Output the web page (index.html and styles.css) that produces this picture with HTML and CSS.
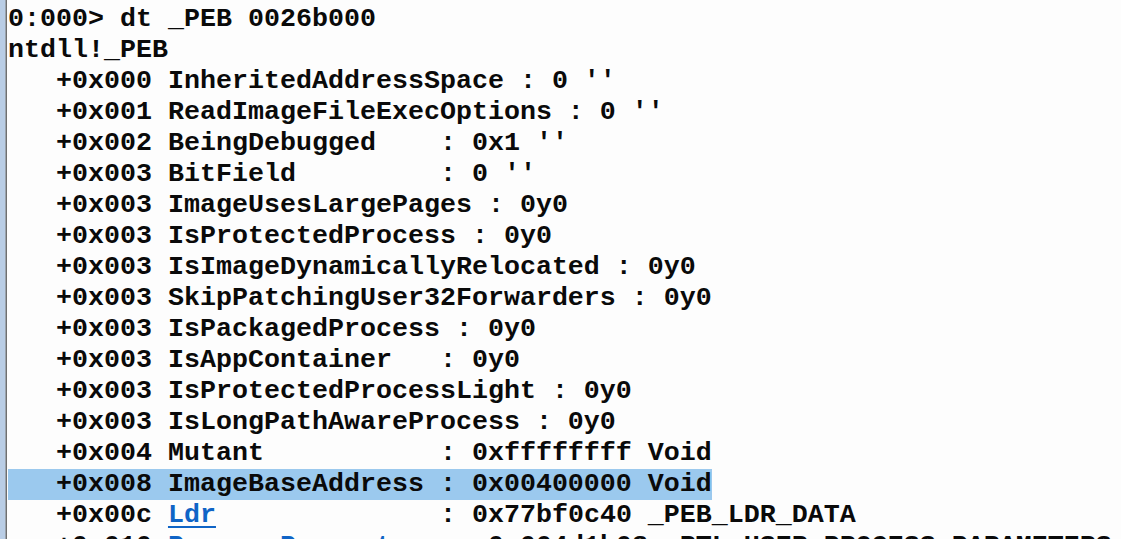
FILE: index.html
```html
<!DOCTYPE html>
<html>
<head>
<meta charset="utf-8">
<link rel="stylesheet" href="styles.css">
</head>
<body>
<div class="window">
  <div class="gutter"></div>
  <div class="output">
    <div class="line">0:000&gt; dt _PEB 0026b000</div>
    <div class="line">ntdll!_PEB</div>
    <div class="line">   +0x000 InheritedAddressSpace : 0 ''</div>
    <div class="line">   +0x001 ReadImageFileExecOptions : 0 ''</div>
    <div class="line">   +0x002 BeingDebugged    : 0x1 ''</div>
    <div class="line">   +0x003 BitField         : 0 ''</div>
    <div class="line">   +0x003 ImageUsesLargePages : 0y0</div>
    <div class="line">   +0x003 IsProtectedProcess : 0y0</div>
    <div class="line">   +0x003 IsImageDynamicallyRelocated : 0y0</div>
    <div class="line">   +0x003 SkipPatchingUser32Forwarders : 0y0</div>
    <div class="line">   +0x003 IsPackagedProcess : 0y0</div>
    <div class="line">   +0x003 IsAppContainer   : 0y0</div>
    <div class="line">   +0x003 IsProtectedProcessLight : 0y0</div>
    <div class="line">   +0x003 IsLongPathAwareProcess : 0y0</div>
    <div class="line">   +0x004 Mutant           : 0xffffffff Void</div>
    <div class="line selected">   +0x008 ImageBaseAddress : 0x00400000 Void</div>
    <div class="line">   +0x00c <a class="link" href="#">Ldr</a>              : 0x77bf0c40 _PEB_LDR_DATA</div>
    <div class="line">   +0x010 <a class="link" href="#">ProcessParameters</a> : 0x004d1b08 _RTL_USER_PROCESS_PARAMETERS</div>
  </div>
</div>
</body>
</html>
```
FILE: styles.css
```css
html, body {
  margin: 0;
  padding: 0;
  width: 1121px;
  height: 539px;
  overflow: hidden;
  background: #fdfdfd;
}

.window {
  display: flex;
  height: 539px;
  overflow: hidden;
}

.gutter {
  flex: 0 0 5px;
  background: #b9cde5;
  border-right: 1px solid #9aa3ad;
  box-shadow: 1px 0 0 #6f6f6f;
  margin-right: 2px;
}

.output {
  flex: 1;
  padding-top: 4px;
  font-family: "Liberation Mono", "Courier New", monospace;
  font-weight: bold;
  font-size: 26.66px;
  line-height: 31px;
  color: #0a0a0a;
}

.line {
  height: 31px;
  width: fit-content;
  white-space: pre;
}

.selected {
  background: #9bc9ee;
}

.link {
  color: #0f64c6;
  text-decoration: underline;
  text-decoration-thickness: 2px;
  text-underline-offset: 4px;
}
```
